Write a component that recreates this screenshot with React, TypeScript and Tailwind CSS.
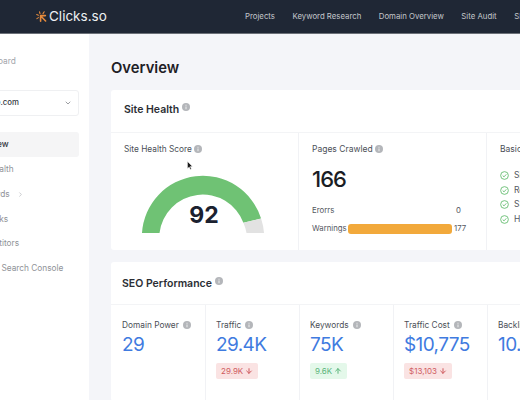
import { ChevronDown, ChevronRight, ArrowDown, ArrowUp } from "lucide-react"

const navLinks = ["Projects", "Keyword Research", "Domain Overview", "Site Audit", "SEO"]
const sideLinks = ["Site Health", "Keywords", "Backlinks", "Competitors", "Google Search Console"]
const checks = ["Sitemap", "Robots.txt", "SSL Certificate", "HTTPS"]

function InfoDot({ size = 8 }: { size?: number }) {
  return (
    <svg width={size} height={size} viewBox="0 0 16 16" className="shrink-0">
      <circle cx="8" cy="8" r="8" fill="#b4b6ba" />
      <rect x="7" y="7" width="2" height="5.5" fill="#eceded" />
      <rect x="7" y="3.5" width="2" height="2" fill="#eceded" />
    </svg>
  )
}

function Logo() {
  return (
    <svg width="11" height="11" viewBox="0 0 11 11" className="shrink-0">
      <g stroke="#e58a3c" strokeWidth="1.1" strokeLinecap="round" fill="none">
        <path d="M3.5.8 4 2.6" />
        <path d="M8.2.8 7 2.6" />
        <path d="M.7 3.6 2.4 4.3" />
        <path d="M.9 7.6 2.4 6.6" />
        <path d="M4.6 4.6v5.6M4.6 4.6h4.8M5 5.2 9.6 10" strokeWidth="1.6" />
      </g>
    </svg>
  )
}

function Gauge() {
  return (
    <div className="relative h-[62px] w-[124px]">
      <svg width="124" height="62" viewBox="0 0 124 62">
        <path d="M1 62 A61 61 0 0 1 120.1 47.6 L102.4 51.7 A43.5 43.5 0 0 0 18.5 62 Z" fill="#6fc274" />
        <path d="M120.1 47.6 A61 61 0 0 1 123 62 L105.5 62 A43.5 43.5 0 0 0 102.4 51.7 Z" fill="#e2e2e2" />
      </svg>
      <div className="absolute left-[2px] right-0 top-[30px] text-center text-[23px] font-bold leading-[28px] text-[#1b2130]">92</div>
    </div>
  )
}

function Stat({ label, value, badge, up }: { label: string; value: string; badge?: string; up?: boolean }) {
  return (
    <div className="h-[96px] w-[94px] shrink-0 border-r border-[#f1f2f5] pl-[10px] pt-[14px]">
      <div className="flex items-center gap-[4px] text-[8.3px] leading-[12px] text-[#4b4f57]">
        {label}
        <InfoDot />
      </div>
      <div className="mt-[1px] text-[19px] leading-[26px] tracking-[-0.6px] text-[#3f7be0]">{value}</div>
      {badge && (
        <div
          className={
            up
              ? "mt-[5px] flex h-[16px] w-fit items-center gap-[2px] rounded-[2px] bg-[#e4f8ea] px-[5px] text-[8px] text-[#5bb47a]"
              : "mt-[5px] flex h-[16px] w-fit items-center gap-[2px] rounded-[2px] bg-[#fae3e3] px-[5px] text-[8px] text-[#cf5b5f]"
          }
        >
          {badge}
          {up ? <ArrowUp size={8} strokeWidth={3} /> : <ArrowDown size={8} strokeWidth={3} />}
        </div>
      )}
    </div>
  )
}

export default function App() {
  return (
    <div className="relative flex h-[400px] w-[520px] flex-col overflow-hidden bg-[#f4f5f9] font-['Inter',sans-serif]">
      {/* Header */}
      <header className="flex h-[34px] shrink-0 items-center border-b border-[#6b7078] bg-[#1f2735] pl-[36px]">
        <div className="flex w-[209px] shrink-0 items-center gap-[2px]">
          <Logo />
          <span className="text-[13.5px] leading-none text-[#eef0f2]">Clicks.so</span>
        </div>
        <nav className="flex shrink-0 gap-[17.5px] text-[7.8px] text-[#c3c6cb]">
          {navLinks.map((link) => (
            <span key={link} className="whitespace-nowrap">{link}</span>
          ))}
        </nav>
      </header>

      <div className="flex min-h-0 flex-1">
        {/* Sidebar */}
        <aside className="w-[89px] shrink-0 overflow-hidden bg-white">
          <div className="-ml-[48px] w-[127px] pt-[21px]">
            <div className="pl-[21px] text-[8.3px] leading-[12px] text-[#a3a6ab] whitespace-nowrap">Dashboard</div>
            <div className="mt-[23px] flex h-[26px] items-center justify-between rounded-[3px] border border-[#eff0f2] pl-[17px] pr-[6px] text-[7.8px] font-medium text-[#34383f]">
              <span className="whitespace-nowrap">clicksso.com</span>
              <ChevronDown size={8} className="text-[#6a6d73]" />
            </div>
            <div className="mt-[16px] flex h-[25px] items-center rounded-[3px] bg-[#f5f5f6] pl-[19px] text-[8.3px] font-medium text-[#33373e]">Overview</div>
            <div className="flex flex-col text-[8.3px] text-[#8f9297]">
              {sideLinks.map((link) => (
                <div key={link} className="flex h-[24.7px] items-center gap-[7px] whitespace-nowrap pl-[19px]">
                  {link}
                  {link === "Keywords" && <ChevronRight size={7} className="text-[#a9abb0]" />}
                </div>
              ))}
            </div>
          </div>
        </aside>

        {/* Main */}
        <main className="w-[560px] shrink-0 pl-[22px] pt-[22px]">
          <h1 className="text-[14.8px] font-semibold leading-[24px] text-[#1d2026]">Overview</h1>
          <section className="mt-[10px] h-[160px] w-[520px] rounded-[3px] bg-white">
            <div className="flex h-[43px] items-start gap-[3px] border-b border-[#f3f4f6] pl-[13px] pt-[13px]">
              <span className="text-[10.5px] font-semibold leading-[13px] text-[#2b2e34]">Site Health</span>
              <InfoDot />
            </div>
            <div className="flex h-[117px]">
              <div className="w-[188px] shrink-0 border-r border-[#f1f2f5] pl-[13px] pt-[10px]">
                <div className="flex items-center gap-[2px] text-[8.3px] leading-[12px] text-[#4b4f57]">
                  Site Health Score
                  <InfoDot />
                </div>
                <div className="ml-[17px] mt-[16px]">
                  <Gauge />
                </div>
              </div>
              <div className="w-[188px] shrink-0 border-r border-[#f1f2f5] pl-[13px] pt-[10px]">
                <div className="flex items-center gap-[2px] text-[8.5px] leading-[12px] text-[#4b4f57]">
                  Pages Crawled
                  <InfoDot />
                </div>
                <div className="mt-[10px] text-[22px] font-medium leading-[28px] tracking-[-1px] text-[#1a1d24]">166</div>
                <div className="mt-[12px] flex h-[12px] items-center text-[7.8px] text-[#55585f]">
                  <span className="w-[144px]">Erorrs</span>
                  <span>0</span>
                </div>
                <div className="mt-[6px] flex h-[12px] items-center text-[7.8px] text-[#55585f]">
                  <span className="w-[36px]">Warnings</span>
                  <div className="h-[10px] w-[104px] rounded-[3px] bg-[#f2a93b]" />
                  <span className="ml-[2px]">177</span>
                </div>
              </div>
              <div className="flex-1 pl-[13px] pt-[10px]">
                <div className="text-[8.5px] leading-[12px] text-[#4b4f57] whitespace-nowrap">Basic SEO Checks</div>
                <div className="mt-[16px] flex flex-col gap-[5px]">
                  {checks.map((check) => (
                    <div key={check} className="flex h-[9.5px] items-center gap-[5px] text-[8.5px] text-[#55585f] whitespace-nowrap">
                      <svg width="9" height="9" viewBox="0 0 10 10" fill="none" className="shrink-0">
                        <circle cx="5" cy="5" r="4.3" stroke="#67bd72" />
                        <path d="M3 5.1 4.5 6.5 7 3.7" stroke="#67bd72" />
                      </svg>
                      {check}
                    </div>
                  ))}
                </div>
              </div>
            </div>
          </section>
          <section className="mt-[12px] w-[520px] rounded-[3px] bg-white">
            <div className="flex h-[43px] items-start gap-[3px] border-b border-[#f3f4f6] pl-[11px] pt-[15px]">
              <span className="text-[10.5px] font-semibold leading-[13px] text-[#2b2e34]">SEO Performance</span>
              <InfoDot />
            </div>
            <div className="flex pl-[1px]">
              <Stat label="Domain Power" value="29" />
              <Stat label="Traffic" value="29.4K" badge="29.9K" />
              <Stat label="Keywords" value="75K" badge="9.6K" up />
              <Stat label="Traffic Cost" value="$10,775" badge="$13,103" />
              <Stat label="Backlinks" value="10.2K" />
            </div>
          </section>
        </main>
      </div>

      {/* Mouse pointer */}
      <svg width="6" height="9" viewBox="0 0 6 9" className="absolute left-[187px] top-[161px]">
        <path d="M.5.5v7l1.7-1.5L3.4 8.5l1-.5-1.2-2.4 2.2-.2Z" fill="#1a1a1a" stroke="#fff" strokeWidth=".4" />
      </svg>
    </div>
  )
}
